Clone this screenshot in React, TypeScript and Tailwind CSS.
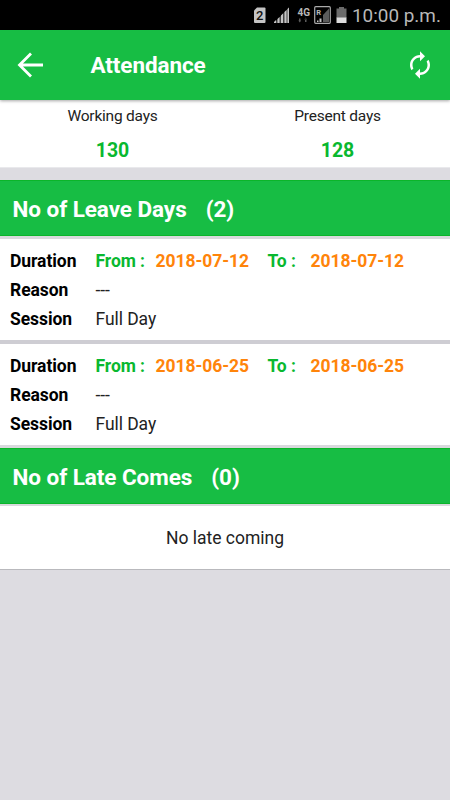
type Leave = {
  from: string;
  to: string;
  reason: string;
  session: string;
};

const leaves: Leave[] = [
  { from: '2018-07-12', to: '2018-07-12', reason: '---', session: 'Full Day' },
  { from: '2018-06-25', to: '2018-06-25', reason: '---', session: 'Full Day' },
];

function StatusBar() {
  return (
    <div className="flex h-[30px] items-center bg-black pl-[253px] text-[#b8b8b8]">
      <svg width="98" height="30" viewBox="0 0 98 30" className="shrink-0" fontFamily="Roboto, sans-serif">
        <path d="M1 10.5 4 7.5h7.5q1 0 1 1V22q0 1-1 1H2q-1 0-1-1z" fill="#c4c4c4" />
        <text x="3" y="20.2" fontSize="13" fontWeight="500" fill="#111">2</text>
        <path d="M21 23 36 7.5V23z" fill="#444" />
        <path d="M21 23v-1l2-2v3zM24.5 23v-4l2-2v6zM28 23v-7.5l2-2V23zM31.5 23V12l2-2v13zM34.5 23V9l1.5-1.5V23z" fill="#c4c4c4" />
        <text x="44.5" y="15.5" fontSize="10" fontWeight="700" fill="#b8b8b8" textLength="12.5">4G</text>
        <path d="M46 18.5h1.5V22H46zM45.3 20.5h2.9l-1.45 2zM52 18.5h1.5V22H52zM51.3 19.5h2.9l-1.45-2z" fill="#5c5c5c" />
        <rect x="61.7" y="6.7" width="15.6" height="16.6" rx="1" fill="none" stroke="#aaa" strokeWidth="1.2" />
        <text x="63.2" y="14.5" fontSize="7.5" fontWeight="700" fill="#b8b8b8">R</text>
        <path d="M64 20.5h1.5V22H64zM66.5 18.5h2V22h-2z" fill="#c4c4c4" />
        <path d="M70 15 76 8.5V22h-6z" fill="#5c5c5c" />
        <path d="M86 7h5v1.5h2.5V18h-10V8.5H86z" fill="#6b6b6b" />
        <path d="M83.5 17.5h10V23h-10z" fill="#ddd" />
      </svg>
      <span className="ml-px pt-[2px] text-[18.9px] leading-7 whitespace-nowrap">10:00 p.m.</span>
    </div>
  );
}

function Header() {
  return (
    <header className="relative z-10 flex h-[70px] items-center bg-[#17bd44] text-white shadow-[0_1px_3px_rgba(0,0,0,0.35)]">
      <svg width="26" height="26" viewBox="0 0 26 26" className="ml-[17px]" fill="none" stroke="currentColor" strokeWidth="2.8">
        <path d="M14 1.5 2.5 13 14 24.5M2.5 13H26" />
      </svg>
      <h1 className="ml-[47.5px] pt-[2px] text-[22.5px] font-bold tracking-[-0.1px]">Attendance</h1>
      <svg width="30" height="30" viewBox="0 0 24 24" className="mr-[15px] ml-auto" fill="currentColor">
        <path d="M12 6v3l4-4-4-4v3c-4.42 0-8 3.58-8 8 0 1.57.46 3.03 1.24 4.26L6.7 14.8c-.45-.83-.7-1.79-.7-2.8 0-3.31 2.69-6 6-6zm6.76 1.74L17.3 9.2c.44.84.7 1.79.7 2.8 0 3.31-2.69 6-6 6v-3l-4 4 4 4v-3c4.42 0 8-3.58 8-8 0-1.57-.46-3.03-1.24-4.26z" />
      </svg>
    </header>
  );
}

function Stat({ label, value }: { label: string; value: number }) {
  return (
    <div className="flex flex-1 flex-col items-center pt-[6px]">
      <span className="text-[15.5px] leading-5 tracking-[-0.22px] text-[#222]">{label}</span>
      <span className="mt-3 text-[19.5px] leading-[26px] font-bold text-[#09b82f]">{value}</span>
    </div>
  );
}

function SectionTitle({ title, count }: { title: string; count: number }) {
  return (
    <h2 className="flex h-14 items-center gap-[19px] border-y border-[#0bb52a] bg-[#17bd44] pt-[3px] pl-[12.5px] text-[22.5px] font-bold tracking-[-0.06px] text-white">
      <span>{title}</span>
      <span>({count})</span>
    </h2>
  );
}

function LeaveCard({ leave }: { leave: Leave }) {
  return (
    <div className="grid h-[101px] grid-cols-[85.5px_1fr] content-start bg-white pt-[8px] pl-[10px] text-[17.5px] leading-[29px] tracking-[-0.06px] text-[#222]">
      <span className="font-bold text-black">Duration</span>
      <div className="grid grid-cols-[60px_112px_43px_1fr] font-bold text-[#ff840a]">
        <span className="text-[#09b82f]">From :</span>
        <span>{leave.from}</span>
        <span className="text-[#09b82f]">To :</span>
        <span>{leave.to}</span>
      </div>
      <span className="font-bold text-black">Reason</span>
      <span>{leave.reason}</span>
      <span className="font-bold text-black">Session</span>
      <span>{leave.session}</span>
    </div>
  );
}

export default function App() {
  return (
    <div className="h-[800px] w-[450px] overflow-hidden bg-[#dddce1] font-['Roboto',sans-serif]">
      <StatusBar />
      <Header />
      <div className="mb-3 flex h-[68px] border-b border-[#e9e9ec] bg-white">
        <Stat label="Working days" value={130} />
        <Stat label="Present days" value={128} />
      </div>

      <SectionTitle title="No of Leave Days" count={2} />
      <div className="flex flex-col gap-1 border-y-[3px] border-[#d9d9dd] bg-[#cecdd3]">
        {leaves.map((leave) => (
          <LeaveCard key={leave.from} leave={leave} />
        ))}
      </div>

      <SectionTitle title="No of Late Comes" count={0} />
      <div className="flex h-[66px] items-center justify-center border-t-2 border-b border-t-[#d9d9dd] border-b-[#b9b9bd] bg-white pt-px text-[17.5px] text-[#222]">
        No late coming
      </div>
    </div>
  );
}
